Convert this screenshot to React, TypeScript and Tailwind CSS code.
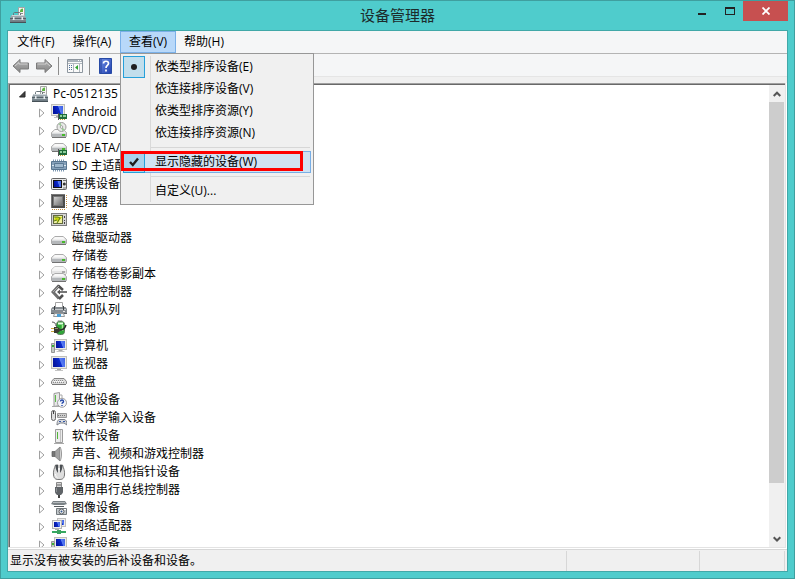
import { useState } from 'react';
import type { ReactNode } from 'react';

function Svg({ children }: { children: ReactNode }) {
  return (
    <svg viewBox="0 0 16 16" width="16" height="16" className="shrink-0" aria-hidden="true">
      {children}
    </svg>
  );
}

function Gradients() {
  return (
    <svg width="0" height="0" className="absolute" aria-hidden="true">
      <defs>
        <linearGradient id="screen" x1="0" y1="0.3" x2="1" y2="0">
          <stop offset="0" stopColor="#0516a0" />
          <stop offset="0.5" stopColor="#0c2cd0" />
          <stop offset="0.58" stopColor="#5a7df0" />
          <stop offset="1" stopColor="#3a5fe8" />
        </linearGradient>
        <linearGradient id="box" x1="0" y1="0" x2="0" y2="1">
          <stop offset="0" stopColor="#a9b4ba" />
          <stop offset="1" stopColor="#67747c" />
        </linearGradient>
        <linearGradient id="chip" x1="0" y1="0" x2="1" y2="1">
          <stop offset="0" stopColor="#d8d8d8" />
          <stop offset="1" stopColor="#6a6a6a" />
        </linearGradient>
        <linearGradient id="help" x1="0" y1="0" x2="1" y2="1">
          <stop offset="0" stopColor="#6f8fe6" />
          <stop offset="1" stopColor="#1f3fae" />
        </linearGradient>
        <linearGradient id="arrow" x1="0" y1="0" x2="0" y2="1">
          <stop offset="0" stopColor="#b4b4b4" />
          <stop offset="1" stopColor="#858585" />
        </linearGradient>
      </defs>
    </svg>
  );
}

const Toolbox = () => (
  <Svg>
    <path d="M8.500.5h6v8h-6z" fill="#f6f6f4" stroke="#a5a5a5" />
    <path d="M10 4.500c0-2 1-3 3-3v3.500h-3z" fill="#5fb544" />
    <path d="M10 6.500h3" stroke="#8d8d8d" />
    <path d="M3.500 9V6.500c0-1 1-1 1-1h5c1 0 1 1 1 1V9" fill="none" stroke="#68747a" />
    <path d="M1.500 8h13L16 11v4.500H0V11z" fill="url(#box)" />
    <path d="M2 8.500h12" stroke="#ccd4d8" />
    <path d="M0 11.500h16" stroke="#56636a" />
    <path d="M2 12.500h12" stroke="#a4b0b6" />
    <path d="M3 10h1.500v3H3zM11.500 10H13v3h-1.500z" fill="#e6ebee" />
    <path d="M0 15.500h16" stroke="#465157" />
  </Svg>
);

const Screen = ({ x, y, w, h }: { x: number; y: number; w: number; h: number }) => (
  <>
    <rect x={x + w / 2 - 2} y={y + h} width="4" height="2" fill="#a8a8a8" />
    <rect x={x + w / 2 - 4} y={y + h + 1} width="8" height="1" fill="#c4c4c4" />
    <rect x={x + 0.5} y={y + 0.5} width={w - 1} height={h - 1} fill="#ebebe6" stroke="#c0c0bb" />
    <rect x={x + 2} y={y + 2} width={w - 4} height={h - 4} fill="url(#screen)" />
  </>
);

const Card = () => (
  <>
    <path d="M8 10h8v5H8z" fill="#1f6b3a" />
    <path d="M9 11h2v2H9zM12 11h3v2h-3z" fill="#8fd09d" />
    <path d="M9 15.500h1M11 15.500h1M13 15.500h1" stroke="#c8a030" />
    <path d="M7.500 9v7" stroke="#555" />
  </>
);

const Disk = ({ y = 5, light = false }: { y?: number; light?: boolean }) => (
  <>
    <path
      d={`M4 ${y + 0.5}h8l3.500 3v4l-1 1h-13l-1-1v-4z`}
      fill={light ? '#f2f2f2' : '#e4e4e4'}
      stroke={light ? '#c8c8c8' : '#ababab'}
    />
    <path d={`M4 ${y + 1}h8l2.500 2.500h-13z`} fill="#f8f8f8" />
    <path d={`M1 ${y + 4}h14v4H1z`} fill={light ? '#e4e4e4' : '#b4b7ba'} />
    <path d={`M1 ${y + 4.500}h14`} stroke={light ? '#f4f4f4' : '#dadcde'} />
    <path d={`M1 ${y + 8.500}h14`} stroke={light ? '#b0b0b0' : '#727272'} />
    <path d={`M11 ${y + 5}h3v2h-3z`} fill={light ? '#aaa' : '#46b82c'} />
  </>
);

const ICONS: Record<string, ReactNode> = {
  android: (
    <Svg>
      <Screen x={0} y={0} w={14} h={12} />
      <Card />
    </Svg>
  ),
  dvd: (
    <Svg>
      <Disk y={7} />
      <circle cx="10.500" cy="5" r="4.500" fill="#e9ebe9" stroke="#9b9b9b" />
      <path d="M10.500 5 7.500 2A4.500 4.500 0 0 1 10 .9zM10.500 5l3.300 2.600A4.500 4.500 0 0 1 11 9z" fill="#9ccb97" />
      <circle cx="10.500" cy="5" r="1.300" fill="#fff" stroke="#888" strokeWidth=".7" />
    </Svg>
  ),
  ide: (
    <Svg>
      <Disk y={3} />
      <Card />
    </Svg>
  ),
  sd: (
    <Svg>
      <path d="M2 2.500h12M2 12.500h12" stroke="#7c98b2" strokeDasharray="1 1" strokeWidth="2" />
      <path d="M.5 3.500h15v8H.5z" fill="#86a1ba" stroke="#587690" />
      <path d="M3.500 5.500h9v4h-9z" fill="#9fb8cd" stroke="#5b7993" />
      <path d="M1 7.500h2M13 7.500h2" stroke="#dce8f0" />
    </Svg>
  ),
  portable: (
    <Svg>
      <rect x=".5" y="2.500" width="15" height="11" rx="1" fill="#e8e8e8" stroke="#666" />
      <path d="M2 4h9v8H2z" fill="#111" />
      <path d="M3 5h7v6H3z" fill="url(#screen)" />
      <path d="M12 4.500h3M12 12h3" stroke="#777" />
      <circle cx="13.300" cy="8" r="1.500" fill="#333" />
    </Svg>
  ),
  cpu: (
    <Svg>
      <path d="M1 15.500h14M15.500 1v14" stroke="#c08a3e" strokeDasharray="1 1" />
      <rect x="0" y="0" width="14" height="14" fill="#4c4c4c" />
      <rect x="2.500" y="2.500" width="9" height="9" fill="url(#chip)" stroke="#777" />
      <path d="M.5 14V.5H14" stroke="#777" fill="none" />
    </Svg>
  ),
  sensor: (
    <Svg>
      <rect x=".5" y="1.500" width="15" height="12" fill="#d4d4d4" stroke="#7c7c7c" />
      <rect x="2.500" y="3.500" width="9" height="8" fill="#eef0a0" stroke="#626a3c" />
      <path d="M4 5h7L7 10.500 5.500 8 3 9z" fill="#c8d40c" />
      <path d="M3 5h4l2 1-3 5M3 9l3-1" fill="none" stroke="#5d7a1c" />
      <path d="M13.500 4v2M13.500 8v1M13.500 10v2" stroke="#444" />
    </Svg>
  ),
  disk: (
    <Svg>
      <Disk y={6} />
    </Svg>
  ),
  shadow: (
    <Svg>
      <Disk y={0} light />
      <Disk y={7} />
    </Svg>
  ),
  storage: (
    <Svg>
      <path d="M8 1.500 2 8l6 6.500" fill="none" stroke="#6e6e6e" strokeWidth="3" />
      <path d="M7 1.500 12 6M8 15l4-4" fill="none" stroke="#505050" strokeWidth="2.500" />
      <path d="M7 8h9" stroke="#777" strokeWidth="2" />
      <path d="m6 8 3-2.500v5z" fill="#555" />
      <path d="M2 8 8 2" stroke="#aaa" />
    </Svg>
  ),
  printer: (
    <Svg>
      <path d="M4.500 6V.5h7V6" fill="#fff" stroke="#a5a5a5" />
      <path d="M1.500 5h13l1.500 2v5H0V7z" fill="#858b90" />
      <path d="M1 7.500h14" stroke="#c4c8cb" />
      <path d="M3 4h1v4H3zM12 4h1v4h-1z" fill="#3c4043" />
      <path d="M0 11h16v1H0z" fill="#5b6064" />
      <path d="M3.500 11.500h9l1 3h-11z" fill="#eef6fb" stroke="#999" />
      <path d="M6 12h4v3H6z" fill="#4b9fd6" />
      <path d="M12 9.500h2" stroke="#e8e8e8" />
    </Svg>
  ),
  battery: (
    <Svg>
      <path d="M7 .5h4v2H7z" fill="#e8e8e8" stroke="#888" strokeWidth=".5" />
      <rect x="5.500" y="1.500" width="8" height="13" rx="3" fill="#2fa637" stroke="#5c7b5c" />
      <path d="M7 3.500h5" stroke="#e4ffe0" strokeWidth="2" />
      <path d="M11.500 5v6" stroke="#a5ec93" strokeWidth="1.500" />
      <path d="M0 8.500h3M0 11.500h3" stroke="#c9a63b" strokeWidth="1.200" />
      <path d="M3 7h3c4 1 4 5 0 6H3z" fill="#3b3b2f" />
      <path d="M4 8.500h3" stroke="#8b8b74" />
      <path d="M9 10c4 0 5-2 6-5" fill="none" stroke="#2b2b2b" strokeWidth="1.500" />
      <path d="M1 2c3 0 4 2 4 4" fill="none" stroke="#555" />
    </Svg>
  ),
  computer: (
    <Svg>
      <Screen x={3} y={1} w={13} h={11} />
      <path d="M.5 5.500h3v9h-3z" fill="#c2c8c5" stroke="#959595" />
      <path d="M1 7h2v2H1z" fill="#3cb034" />
    </Svg>
  ),
  monitor: (
    <Svg>
      <Screen x={0} y={0} w={16} h={13} />
    </Svg>
  ),
  keyboard: (
    <Svg>
      <path d="M3 4.500h10l2.500 3v2l-1 1h-13l-1-1v-2z" fill="#dadada" stroke="#858585" />
      <path d="M3 6.500h10M2 8.500h12" stroke="#8b8b8b" strokeDasharray="1 1" />
      <path d="M3 7.500h10" stroke="#fff" strokeDasharray="1 1" />
      <path d="M1 10.500h14" stroke="#777" />
    </Svg>
  ),
  other: (
    <Svg>
      <path d="M3 1.500 8.500.5v13L3 14.500z" fill="#e8e8e8" stroke="#9b9b9b" />
      <path d="M1 14.500h7M8.500 3H11v5" fill="none" stroke="#aaa" />
      <path d="M4.500 3v7" stroke="#5cbc46" />
      <circle cx="11" cy="10.800" r="4.500" fill="#f4f6fb" stroke="#9e9e9e" />
      <path d="M9.500 9.500c0-2 3-2 3 0 0 1.200-1.500 1-1.500 2.300M11 13v1" fill="none" stroke="#2347a8" strokeWidth="1.400" />
    </Svg>
  ),
  hid: (
    <Svg>
      <rect x=".5" y=".5" width="4" height="10" rx="2" fill="#e0e0e0" stroke="#666" />
      <path d="M2.500 1v3" stroke="#444" />
      <path d="M6.500 3.500h9v4h-9z" fill="#ccc" stroke="#999" />
      <path d="M7 5.500h8" stroke="#777" strokeDasharray="1 1" />
      <path d="M6 15c0-4 1-5.500 3-5.500h4c2 0 3 2 3 5.500l-3-2h-4z" fill="#d8dbe0" stroke="#7b7f88" />
      <path d="M8 11.500h2M12 11.500h2" stroke="#3658a5" />
    </Svg>
  ),
  software: (
    <Svg>
      <path d="M4.500 1.500h7v13h-7z" fill="#ececec" stroke="#9c9c9c" />
      <path d="M6.500 4v7" stroke="#52b83a" />
      <path d="M9.500 2v12" stroke="#c2c2c2" />
      <path d="M3 15.500h10" stroke="#aaa" />
    </Svg>
  ),
  sound: (
    <Svg>
      <path d="M1 5.500h3v5H1z" fill="#777" stroke="#5a5a5a" strokeWidth=".7" />
      <path d="M4 5.500 9 1v14l-5-4.500z" fill="#a2a2a2" stroke="#777" strokeWidth=".7" />
      <path d="M9 1c2 3 2 11 0 14" fill="#d7d7d7" stroke="#999" />
    </Svg>
  ),
  mouse: (
    <Svg>
      <path d="M4.500 1h7c1 3 2.500 6 2 10S11 15.500 8 15.500 3 15 2.500 11s1-7 2-10z" fill="#dedede" stroke="#777" />
      <path d="M4.500 1c0 4 1 6 2.500 8V1zM11.500 1c0 4-1 6-2.500 8V1z" fill="#4b4f54" />
      <path d="M7 0h2v6H7z" fill="#f4f4f4" />
      <path d="M8 1v3" stroke="#999" />
      <path d="M4.500 10c0 2 1 3.500 2 4" stroke="#fff" fill="none" />
    </Svg>
  ),
  usb: (
    <Svg>
      <path d="M5.500.5h5v5h-5z" fill="#d8d8d8" stroke="#888" />
      <path d="M6.500 2h1v2h-1zM8.500 2h1v2h-1z" fill="#666" />
      <path d="M4 5h8v5c0 1-1 2-2 3H6c-1-1-2-2-2-3z" fill="#606468" />
      <path d="M5.500 6v4" stroke="#8b8f93" />
      <path d="M7 13h2v3H7z" fill="#444" />
    </Svg>
  ),
  imaging: (
    <Svg>
      <path d="M2 1h12l2 3-3 1H3L0 4z" fill="#7b8286" />
      <path d="M2 2.500h12" stroke="#b5babd" />
      <path d="M3 6h10v1H3z" fill="#555b5f" />
      <path d="M5.500 8.500h10v6h-10z" fill="#c3c8cb" stroke="#737a7e" />
      <circle cx="10.500" cy="11.500" r="2.500" fill="#eee" stroke="#5b6064" />
      <circle cx="10.500" cy="11.500" r="1" fill="#31568e" />
      <path d="M13 9.500h2" stroke="#fff" />
    </Svg>
  ),
  network: (
    <Svg>
      <rect x="6.500" y=".5" width="8" height="8" fill="#ededed" stroke="#c0c0c0" />
      <path d="M8 2h5v5H8z" fill="url(#screen)" />
      <rect x="1.500" y="2.500" width="9" height="8" fill="#f1f1f1" stroke="#b4b4b4" />
      <path d="M3 4h6v5H3z" fill="url(#screen)" />
      <path d="M4 11h4v1H4z" fill="#aaa" />
      <path d="M1 14h14" stroke="#36a861" strokeWidth="2" />
      <path d="M6 12h4v4H6z" fill="#3aa35e" />
    </Svg>
  ),
};

const DEVICES: [string, string][] = [
  ['android', 'Android'],
  ['dvd', 'DVD/CD'],
  ['ide', 'IDE ATA/'],
  ['sd', 'SD 主适配'],
  ['portable', '便携设备'],
  ['cpu', '处理器'],
  ['sensor', '传感器'],
  ['disk', '磁盘驱动器'],
  ['disk', '存储卷'],
  ['shadow', '存储卷卷影副本'],
  ['storage', '存储控制器'],
  ['printer', '打印队列'],
  ['battery', '电池'],
  ['computer', '计算机'],
  ['monitor', '监视器'],
  ['keyboard', '键盘'],
  ['other', '其他设备'],
  ['hid', '人体学输入设备'],
  ['software', '软件设备'],
  ['sound', '声音、视频和游戏控制器'],
  ['mouse', '鼠标和其他指针设备'],
  ['usb', '通用串行总线控制器'],
  ['imaging', '图像设备'],
  ['network', '网络适配器'],
  ['computer', '系统设备'],
];

const SORTS = ['依类型排序设备(E)', '依连接排序设备(V)', '依类型排序资源(Y)', '依连接排序资源(N)'];

function TitleBar() {
  return (
    <header className="-mx-1.5 flex h-[29px] shrink-0 items-start">
      <div className="flex w-36 pl-[9px] pt-1.5">
        <Toolbox />
      </div>
      <h1 className="flex-1 pt-1 text-center text-[15px] leading-5 text-[#1c2b2b]">设备管理器</h1>
      <div className="mr-[6px] flex w-[138px] justify-end">
        <button aria-label="最小化" className="flex h-5 w-7 justify-center pt-3">
          <span className="h-[2px] w-2 bg-[#222]" />
        </button>
        <button aria-label="最大化" className="flex h-5 w-[27px] justify-center pt-1.5">
          <span className="h-2 w-2.5 border border-t-2 border-[#222]" />
        </button>
        <button aria-label="关闭" className="flex h-5 w-[45px] items-center justify-center bg-[#c75050]">
          <svg viewBox="0 0 8 8" width="8" height="8" aria-hidden="true">
            <path d="m.5.5 7 7m0-7-7 7" stroke="#fff" strokeWidth="1.800" />
          </svg>
        </button>
      </div>
    </header>
  );
}

function ViewMenu() {
  const [sort, setSort] = useState(0);
  const [hidden, setHidden] = useState(true);
  return (
    <div className="absolute left-0 top-[22px] z-10 w-[194px] border border-[#979797] bg-[#f0f0f0] p-[2px]">
      <div className="absolute inset-y-[2px] left-[29px] w-px bg-[#d9d9d9]" />
      {SORTS.map((label, i) => (
        <label key={label} className="relative flex h-[22px] items-center">
          <input
            type="radio"
            name="sort"
            checked={sort === i}
            onChange={() => setSort(i)}
            className="peer h-[22px] w-[22px] appearance-none checked:border checked:border-[#26a0da] checked:bg-[#c2deec]"
          />
          <span className="absolute left-2 h-1.5 w-1.5 rounded-full bg-[#1e1e1e] opacity-0 peer-checked:opacity-100" />
          <span className="pl-[10px]">{label}</span>
        </label>
      ))}
      <div className="ml-7 mr-px h-[7px] pt-[3px]">
        <hr className="border-[#d7d7d7]" />
      </div>
      <label className="relative flex h-[22px] items-center border border-[#78aee5] bg-[#d1e2f2]">
        <input
          type="checkbox"
          checked={hidden}
          onChange={() => setHidden(!hidden)}
          className="peer -ml-px h-[22px] w-[22px] appearance-none checked:border checked:border-[#26a0da] checked:bg-[#a9d2eb]"
        />
        <svg viewBox="0 0 10 10" width="10" height="10" className="absolute left-[5px] opacity-0 peer-checked:opacity-100" aria-hidden="true">
          <path d="m1 5 2.800 3L9 1.500" fill="none" stroke="#1e1e1e" strokeWidth="2.400" />
        </svg>
        <span className="pl-[10px]">显示隐藏的设备(W)</span>
        <span className="absolute -left-[3px] -top-px h-5 w-[182px] border-[3px] border-[#fe0000]" />
      </label>
      <div className="ml-7 mr-px h-[7px] pt-[3px]">
        <hr className="border-[#d7d7d7]" />
      </div>
      <button className="flex h-[22px] w-full items-center pl-8">自定义(U)...</button>
    </div>
  );
}

function MenuBar() {
  return (
    <nav className="flex h-[23px] shrink-0 border-b border-[#b4b4b4] bg-[#f5f6f7]">
      <button className="h-[22px] w-14">文件(F)</button>
      <button className="h-[22px] w-14">操作(A)</button>
      <div className="relative">
        <button className="h-[22px] w-14 border border-[#7ab0e8] bg-[#b8d8f9]">查看(V)</button>
        <ViewMenu />
      </div>
      <button className="h-[22px] w-14">帮助(H)</button>
    </nav>
  );
}

function ToolBar() {
  return (
    <div className="flex h-[23px] shrink-0 items-center border-b border-[#e5e5e5] bg-[#f5f6f7] pl-1 pt-[2px]">
      <button aria-label="后退" className="flex w-[23px]">
        <svg viewBox="0 0 18 16" width="18" height="16" aria-hidden="true">
          <path d="M1 8 8 1.500V5h8.500v6H8v3.500z" fill="url(#arrow)" stroke="#7b7b7b" />
          <path d="M3 8l4-3.500V6h8.500" fill="none" stroke="#d0d0d0" />
        </svg>
      </button>
      <button aria-label="前进" className="flex w-[23px]">
        <svg viewBox="0 0 18 16" width="18" height="16" aria-hidden="true">
          <path d="M17 8 10 1.500V5H1.500v6H10v3.500z" fill="url(#arrow)" stroke="#7b7b7b" />
          <path d="M2.500 6H11V4.500L15 8" fill="none" stroke="#d0d0d0" />
        </svg>
      </button>
      <span className="h-[18px] w-px bg-[#8d8d8d]" />
      <button aria-label="显示/隐藏控制台树" className="flex w-[30px] justify-center pl-[2px]">
        <svg viewBox="0 0 16 14" width="16" height="14" aria-hidden="true">
          <path d="M.5.5h15v13H.5z" fill="#fafafa" stroke="#8d969f" />
          <path d="M1 1h14v2H1z" fill="#a9b2bb" />
          <path d="M11 1.500h3" stroke="#fff" strokeDasharray="1 1" />
          <path d="M1 4.500h14M6.500 5v8M12.500 5v8" stroke="#b0b8bf" />
          <path d="M2 6.500h3M2 8.500h3M2 10.500h3" stroke="#4d6f9c" strokeDasharray="1 1" />
          <path d="M11 6v5L8 8.500z" fill="#2fa32f" />
        </svg>
      </button>
      <span className="h-[18px] w-px bg-[#8d8d8d]" />
      <button aria-label="帮助" className="flex w-[31px] justify-center">
        <svg viewBox="0 0 13 16" width="13" height="16" aria-hidden="true">
          <path d="M.5.5h12v15H.5z" fill="url(#help)" stroke="#274aa5" />
          <path d="M2 1v14" stroke="#254099" />
          <path d="M4.500 5.500c0-3 5-3 5 0 0 2-2.500 2-2.500 4.500M7 11.500v2" fill="none" stroke="#fff" strokeWidth="1.700" />
        </svg>
      </button>
    </div>
  );
}

function DeviceTree() {
  return (
    <ul className="min-w-0 flex-1 overflow-hidden">
      <li>
        <div className="flex h-[18px] items-center pl-2">
          <svg viewBox="0 0 8 8" width="8" height="8" className="mr-1.5" aria-hidden="true">
            <path d="M7 1.500V7H1.500z" fill="#404040" stroke="#262626" />
          </svg>
          <Toolbox />
          <span className="whitespace-nowrap pl-[5px]">Pc-0512135</span>
        </div>
        <ul>
          {DEVICES.map(([icon, label]) => (
            <li key={label} className="flex h-[18px] items-center pl-7">
              <svg viewBox="0 0 8 10" width="8" height="10" className="mr-[5px] mt-[2px]" aria-hidden="true">
                <path d="M1.500 1v8L6 5z" fill="#fff" stroke="#a0a0a0" />
              </svg>
              {ICONS[icon]}
              <span className="whitespace-nowrap pl-[5px]">{label}</span>
            </li>
          ))}
        </ul>
      </li>
    </ul>
  );
}

function ScrollBar() {
  return (
    <div className="flex w-4 shrink-0 flex-col bg-[#f0f0f0] pr-px">
      <button aria-label="向上滚动" className="flex h-[17px] items-center justify-center">
        <svg viewBox="0 0 8 8" width="8" height="8" aria-hidden="true">
          <path d="M.7 6 4 2.700 7.300 6" fill="none" stroke="#555" strokeWidth="2" />
        </svg>
      </button>
      <div className="flex-1">
        <div className="h-[89%] bg-[#cdcdcd]" />
      </div>
      <button aria-label="向下滚动" className="flex h-[17px] items-center justify-center">
        <svg viewBox="0 0 8 8" width="8" height="8" aria-hidden="true">
          <path d="M.7 2.200 4 5.500l3.300-3.300" fill="none" stroke="#555" strokeWidth="2" />
        </svg>
      </button>
    </div>
  );
}

export default function App() {
  return (
    <div className="flex h-screen flex-col border border-[#3f9f9f] bg-[#4fcccc] px-1.5 pb-1.5 font-['Open_Sans','Noto_Sans_CJK_SC',sans-serif] text-xs text-black">
      <Gradients />
      <TitleBar />
      <main className="flex min-h-0 flex-1 flex-col border border-[#41a8a8] bg-[#f0f0f0]">
        <MenuBar />
        <ToolBar />
        <div className="mt-1.5 flex min-h-0 flex-1 bg-white pb-px pr-px">
          <div className="flex min-w-0 flex-1 border-b border-r border-[#e3e3e3]">
            <div className="flex min-w-0 flex-1 border-l border-t border-[#a0a0a0]">
              <div className="flex min-w-0 flex-1 border-l border-t border-[#696969]">
                <DeviceTree />
                <ScrollBar />
              </div>
            </div>
          </div>
        </div>
        <footer className="flex h-[22px] shrink-0 items-stretch border-t border-[#d7d7d7] pr-[2px] pt-px">
          <p className="flex flex-1 items-center pl-[2px]">显示没有被安装的后补设备和设备。</p>
          <div className="w-[133px] border-l border-[#d7d7d7]" />
          <div className="w-[86px] border-x border-[#d7d7d7]" />
        </footer>
      </main>
    </div>
  );
}
